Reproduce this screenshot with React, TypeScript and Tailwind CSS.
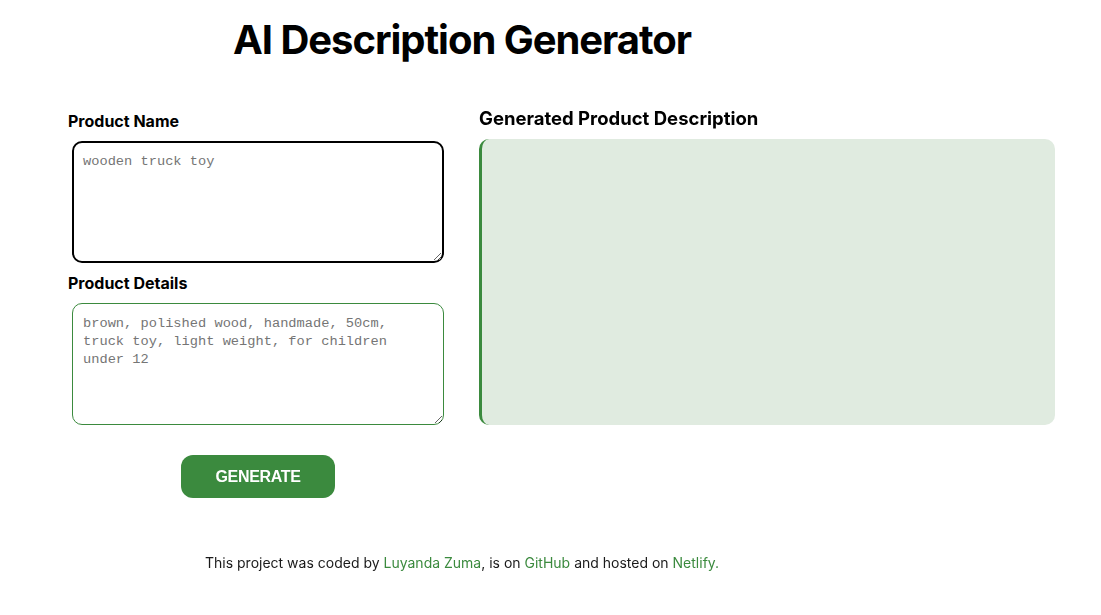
import { useState } from 'react';

export default function App() {
  const [name, setName] = useState('');
  const [details, setDetails] = useState('');

  return (
    <div className="min-h-screen bg-white text-black" style={{ fontFamily: 'Inter, "Liberation Sans", sans-serif' }}>
      <div className="w-[924px] pt-[16px] flex justify-center">
        <h1 className="text-[40px] leading-[48px] font-bold tracking-[-0.026em]">AI Description Generator</h1>
      </div>

      <div className="flex pl-[68px] pt-[45px] gap-[35px]">
        <div className="w-[376px] flex flex-col">
          <label className="text-[16px] leading-[24px] font-bold">Product Name</label>
          <textarea
            autoFocus
            value={name}
            onChange={(e) => setName(e.target.value)}
            placeholder="wooden truck toy"
            className="ml-[4px] mt-[8px] w-[372px] h-[122px] rounded-[10px] border-2 border-black px-[9px] pt-[10px] pb-[9px] text-[13.7px] leading-[18px] outline-none placeholder:text-[#757575]"
            style={{ fontFamily: '"Liberation Mono", monospace' }}
          />
          <label className="mt-[8px] text-[16px] leading-[24px] font-bold">Product Details</label>
          <textarea
            value={details}
            onChange={(e) => setDetails(e.target.value)}
            placeholder="brown, polished wood, handmade, 50cm, truck toy, light weight, for children under 12"
            className="ml-[4px] mt-[8px] w-[372px] h-[122px] rounded-[10px] border border-[#3b8a3e] px-[10px] pt-[11px] pb-[10px] text-[13.7px] leading-[18px] outline-none placeholder:text-[#757575]"
            style={{ fontFamily: '"Liberation Mono", monospace' }}
          />
          <div className="ml-[4px] w-[372px] flex justify-center mt-[30px]">
            <button
              className="w-[154px] h-[43px] rounded-[12px] bg-[#3b8a3e] text-white text-[16px] font-bold tracking-[-0.02em]"
              style={{ fontFamily: '"Liberation Sans", Arial, sans-serif' }}
            >
              GENERATE
            </button>
          </div>
        </div>

        <div className="flex flex-col -mt-[5px]">
          <h2 className="text-[18.5px] leading-[28px] font-bold">Generated Product Description</h2>
          <div className="mt-[7px] w-[576px] h-[286px] rounded-[10px] border-l-[3px] border-[#3b8a3e] bg-[#e0ebe0]" />
        </div>
      </div>

      <p className="pl-[205px] mt-[55px] text-[14px] leading-[20px] text-[#1a1a1a]">
        This project was coded by{' '}
        <a href="#" className="text-[#3b8a3e]">Luyanda Zuma</a>, is on{' '}
        <a href="#" className="text-[#3b8a3e]">GitHub</a> and hosted on{' '}
        <a href="#" className="text-[#3b8a3e]">Netlify.</a>
      </p>
    </div>
  );
}
